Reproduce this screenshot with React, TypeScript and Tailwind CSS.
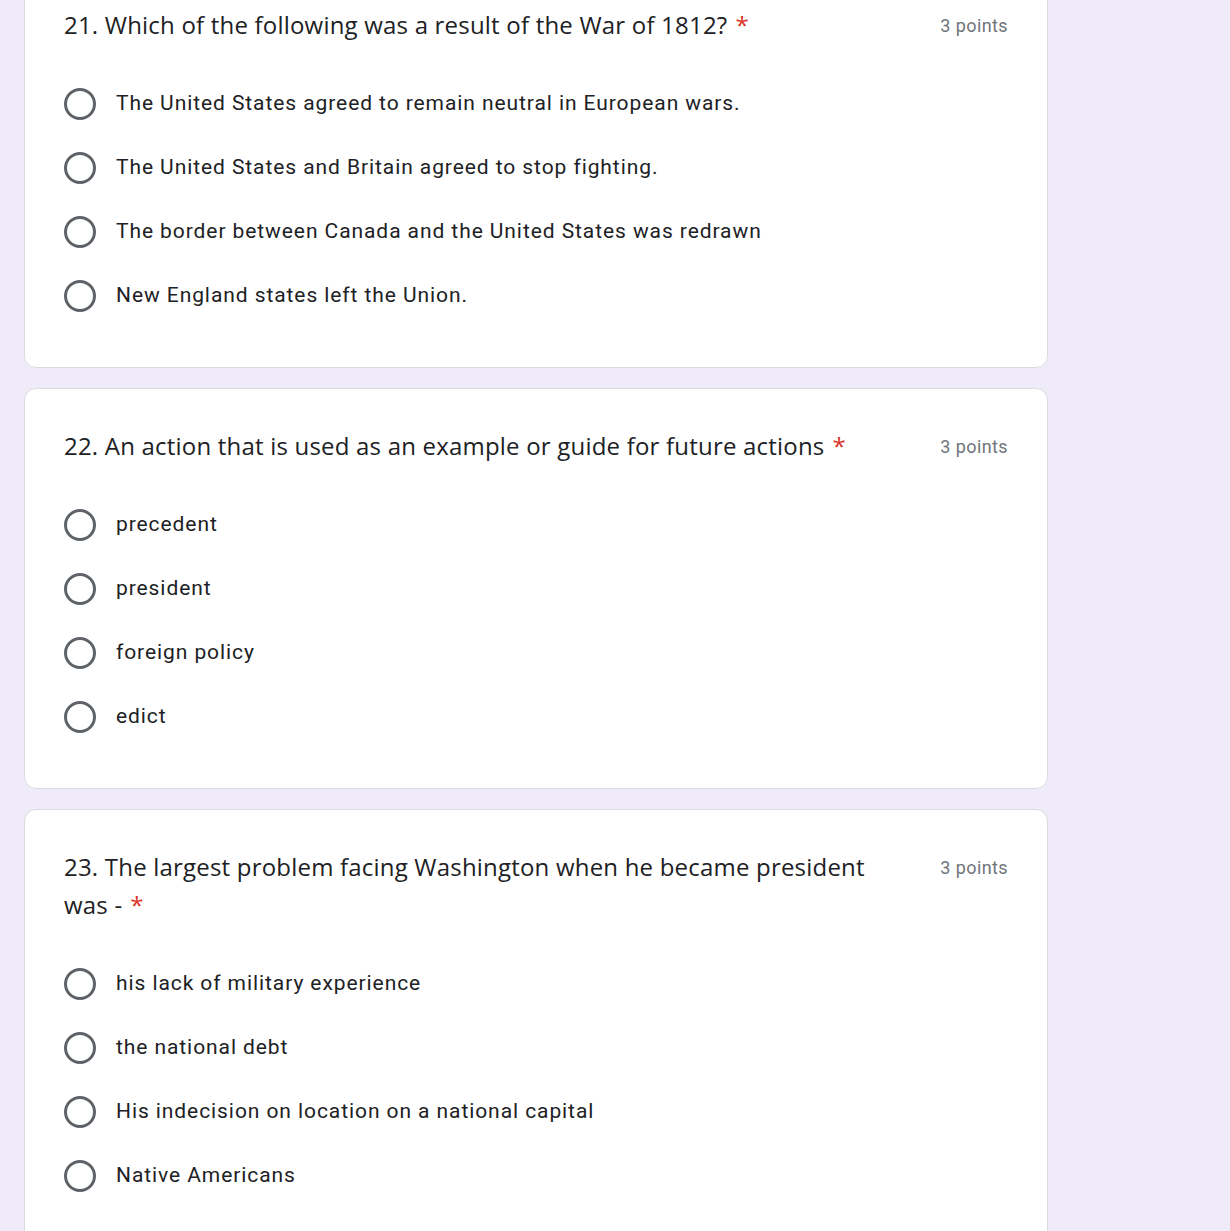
import React from "react";

type Q = { num: number; title: string; options: string[] };

const questions: Q[] = [
  {
    num: 21,
    title: "Which of the following was a result of the War of 1812?",
    options: [
      "The United States agreed to remain neutral in European wars.",
      "The United States and Britain agreed to stop fighting.",
      "The border between Canada and the United States was redrawn",
      "New England states left the Union.",
    ],
  },
  {
    num: 22,
    title: "An action that is used as an example or guide for future actions",
    options: ["precedent", "president", "foreign policy", "edict"],
  },
  {
    num: 23,
    title: "The largest problem facing Washington when he became president was -",
    options: [
      "his lack of military experience",
      "the national debt",
      "His indecision on location on a national capital",
      "Native Americans",
    ],
  },
];

function Radio() {
  return (
    <div className="w-[32px] h-[32px] rounded-full border-[3px] border-[#5f6368] shrink-0 box-border" />
  );
}

function Card({ q, first }: { q: Q; first?: boolean }) {
  return (
    <div
      className={
        "bg-white border border-[#dadce0] rounded-[12px] pl-[39px] pr-[39px] pt-[38px] pb-[39px] " +
        (first ? "-mt-[33px]" : "")
      }
    >
      <div className="flex items-start gap-[36px]">
        <div
          className="flex-1 text-[24px] leading-[38px] text-[#202124] tracking-[0.2px]"
          style={{ fontFamily: '"Open Sans", "Noto Sans", sans-serif' }}
        >
          {q.num}. {q.title}
          <span className="text-[#d93025] pl-[8px]">*</span>
        </div>
        <div
          className="text-[18px] leading-[36px] pt-[2px] text-[#70757a] tracking-[0.4px] shrink-0"
          style={{ fontFamily: "Roboto, sans-serif" }}
        >
          3 points
        </div>
      </div>
      <div className="mt-[28px] flex flex-col">
        {q.options.map((o) => (
          <div key={o} className="h-[64px] flex items-center gap-[20px]">
            <Radio />
            <span
              className="text-[21px] text-[#202124] tracking-[0.92px]"
              style={{ fontFamily: "Roboto, sans-serif" }}
            >
              {o}
            </span>
          </div>
        ))}
      </div>
    </div>
  );
}

export default function App() {
  return (
    <div className="min-h-[1231px] bg-[#f0ebf8] overflow-hidden">
      <div className="w-[1024px] ml-[24px] flex flex-col gap-[20px]">
        {questions.map((q, i) => (
          <Card key={q.num} q={q} first={i === 0} />
        ))}
      </div>
    </div>
  );
}
